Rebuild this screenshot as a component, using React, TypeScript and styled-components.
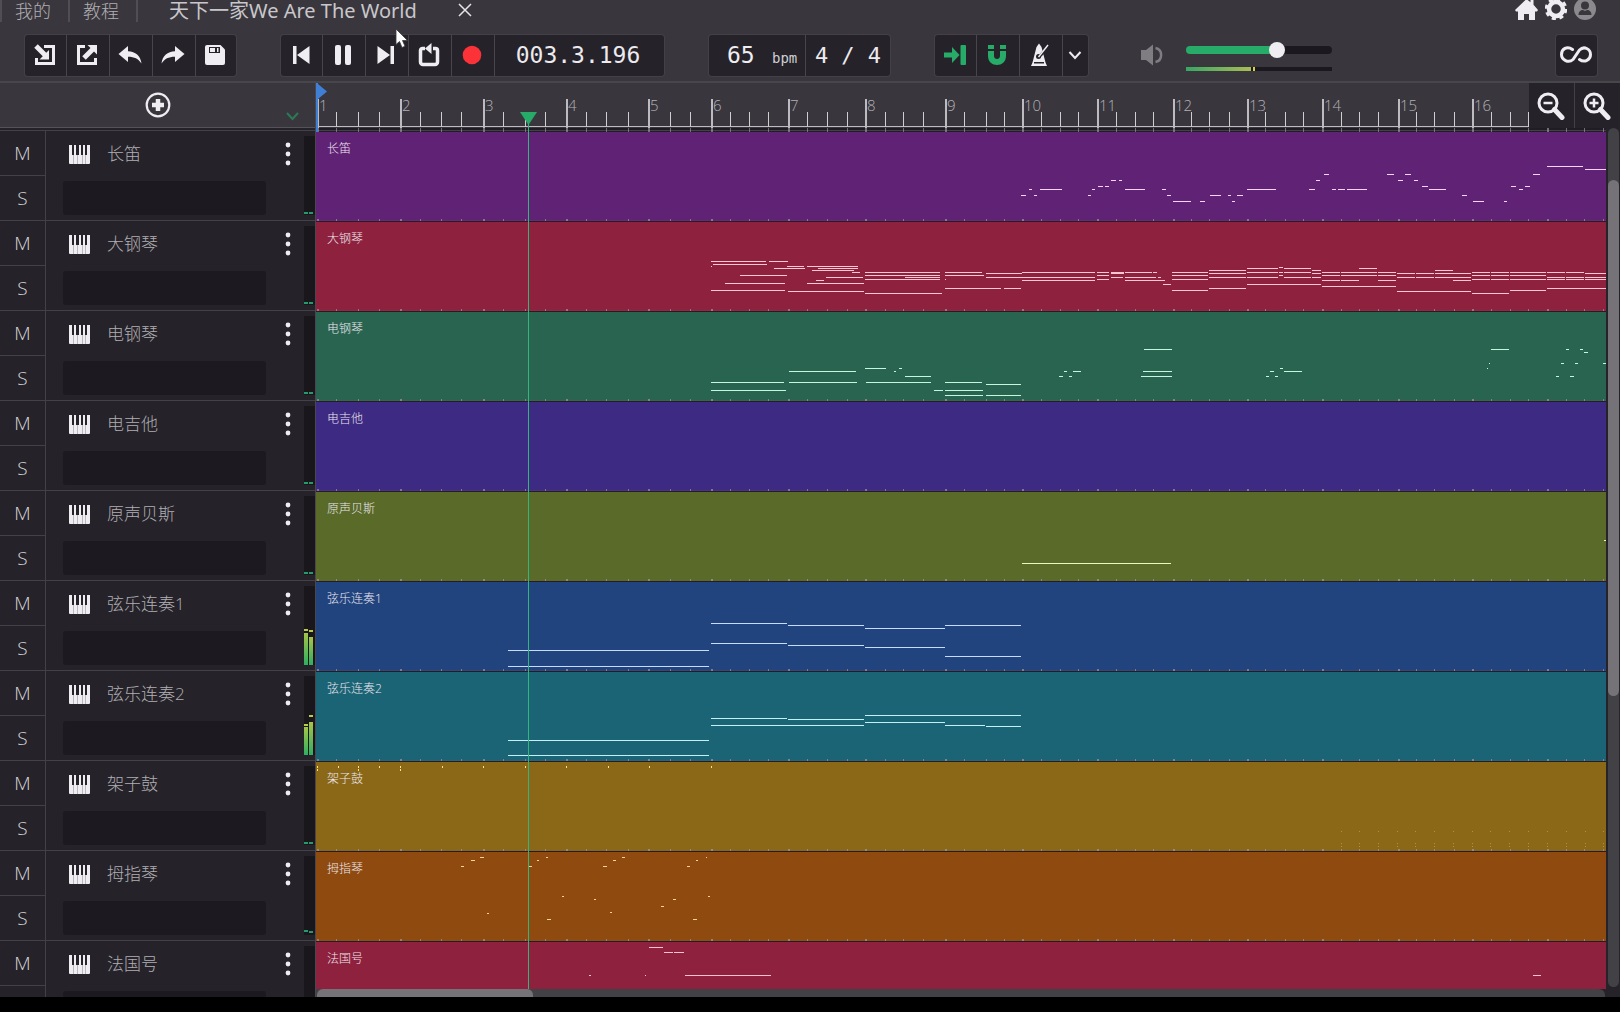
import React from "react";
import styled, { createGlobalStyle } from "styled-components";

const uiFont = '"Open Sans", "Noto Sans", "Noto Sans CJK SC", sans-serif';
const monoFont = '"DejaVu Sans Mono", "Liberation Mono", monospace';

const GlobalStyle = createGlobalStyle`
  * { box-sizing: border-box; }
  body {
    margin: 0;
    background: #000;
    color: #eceaef;
    font-family: ${uiFont};
    overflow: hidden;
  }
  button {
    appearance: none;
    background: none;
    border: 0;
    margin: 0;
    padding: 0;
    color: inherit;
    font: inherit;
    cursor: pointer;
  }
  svg { display: block; flex: none; }
`;

/* ---------- song data ---------- */

const TIMELINE_LEFT = 316;

/* Each entry: bar position followed by the beats inside that bar. */
const BARS: number[][] = [
  [317, 336, 358, 379],
  [400, 420, 441, 461],
  [483, 503, 525, 545],
  [566, 586, 606, 628],
  [648, 670, 690],
  [711, 730, 749, 768],
  [788, 807, 827, 847],
  [865, 885, 903, 923],
  [945, 964, 986, 1004],
  [1022, 1041, 1060, 1078],
  [1097, 1116, 1135, 1153],
  [1173, 1191, 1209, 1229],
  [1247, 1265, 1285, 1303],
  [1322, 1341, 1359, 1378],
  [1398, 1416, 1434, 1454],
  [1472, 1491, 1510, 1528],
  [1547, 1566, 1584, 1603],
];

type Note = [number, number, number, number?];

/* Stacked notes that share their start and length. */
const chord = (x: number, w: number, ...ys: number[]): Note[] =>
  ys.map((y) => [x, y, w] as Note);

const flute: Note[] = [
  [1021, 63, 5], [1029, 57, 3], [1034, 63, 3], [1040, 57, 22], [1088, 63, 3], [1092, 57, 3],
  [1098, 54, 5], [1105, 54, 4], [1111, 48, 5], [1119, 48, 3], [1125, 57, 20], [1162, 57, 4],
  [1167, 63, 4], [1173, 69, 18], [1200, 69, 5], [1210, 63, 11], [1228, 63, 3], [1232, 69, 3],
  [1237, 63, 6], [1247, 57, 29], [1309, 57, 6], [1316, 48, 4], [1324, 42, 5], [1332, 57, 4],
  [1338, 57, 7], [1347, 57, 20], [1387, 42, 7], [1398, 48, 5], [1405, 42, 6], [1414, 48, 4],
  [1422, 54, 6], [1429, 57, 17], [1462, 63, 5], [1473, 69, 11], [1504, 69, 3], [1511, 54, 5],
  [1519, 57, 4], [1525, 54, 5], [1533, 42, 7], [1547, 34, 36], [1585, 37, 22],
];

const piano: Note[] = [
  [711, 39, 55], [769, 39, 19], [713, 42, 54], [711, 44, 1], [774, 46, 13], [787, 44, 17],
  [787, 46, 18], [807, 44, 51], [818, 46, 40], [812, 48, 42], [852, 50, 8], [826, 55, 37],
  [816, 58, 8], [740, 53, 47], [725, 61, 60], [807, 61, 57], [711, 68, 74], [788, 69, 76],
  ...chord(865, 75, 50, 53, 57), [905, 55, 35], [865, 71, 77],
  [945, 50, 37], [945, 53, 39], [945, 57, 1], [945, 66, 56], [1004, 66, 17],
  ...chord(986, 36, 51, 55), ...chord(1022, 73, 50, 55, 58), ...chord(1097, 12, 50, 53, 57),
  [1111, 50, 13, 2], [1111, 55, 12], [1125, 50, 27], [1153, 50, 4], [1125, 55, 31],
  [1158, 55, 3], [1125, 58, 40], [1163, 62, 8],
  ...chord(1172, 36, 50, 53, 57, 68), ...chord(1209, 37, 48, 51, 55, 66),
  ...chord(1247, 31, 46, 50, 55), ...chord(1279, 4, 45, 50, 53), ...chord(1284, 27, 46, 50, 55),
  ...chord(1312, 9, 48, 51, 55), [1247, 62, 74],
  ...chord(1322, 18, 50, 53, 58), ...chord(1341, 18, 50, 53, 58), [1322, 64, 74],
  ...chord(1359, 18, 46, 50, 53), ...chord(1378, 18, 50, 53, 58),
  ...chord(1397, 18, 51, 55), ...chord(1416, 18, 51, 55), [1397, 69, 74],
  ...chord(1435, 18, 48, 51, 55), ...chord(1453, 18, 51, 55, 58),
  ...chord(1472, 18, 50, 53, 57), ...chord(1491, 18, 50, 53, 57), [1472, 71, 37],
  ...chord(1510, 18, 50, 53, 57), ...chord(1528, 18, 50, 53, 57), [1510, 68, 36],
  ...chord(1547, 18, 50, 55, 57), ...chord(1566, 18, 50, 55, 57),
  ...chord(1585, 22, 51, 55, 57), [1547, 66, 60],
];

const electricPiano: Note[] = [
  [711, 70, 73], [711, 78, 75], [789, 59, 67], [789, 70, 68], [865, 56, 21], [894, 59, 2],
  [899, 56, 3], [905, 64, 26], [866, 70, 65], [934, 78, 9], [945, 70, 37], [945, 78, 38],
  [945, 83, 38], [986, 72, 35], [986, 83, 35], [1059, 64, 4], [1064, 59, 3], [1069, 64, 3],
  [1073, 59, 8], [1144, 37, 28], [1143, 59, 29], [1141, 64, 31], [1266, 64, 3], [1270, 59, 4],
  [1275, 64, 3], [1280, 56, 3], [1284, 59, 18], [1487, 56, 1], [1489, 51, 1], [1491, 37, 18],
  [1556, 64, 3], [1561, 51, 3], [1566, 37, 3], [1570, 64, 4], [1575, 51, 3], [1580, 37, 3],
  [1584, 40, 4], [1603, 51, 3],
];

const strings1: Note[] = [
  ...chord(508, 201, 68, 84), ...chord(711, 76, 41, 61), ...chord(788, 76, 43, 63),
  ...chord(865, 80, 46, 65), ...chord(945, 76, 43, 74),
];

const strings2: Note[] = [
  ...chord(508, 201, 68, 83), [711, 46, 76], [711, 53, 153], [788, 47, 76], [865, 43, 156],
  [865, 50, 80], [945, 53, 40], [986, 54, 35],
];

const drums: Note[] = [
  ...[317, 338, 358, 379, 400, 442, 483, 525, 566, 608, 649, 711].map((x) => [x, 4, 1, 2] as Note),
  ...[317, 358, 400].map((x) => [x, 7, 1, 2] as Note),
];

const quietDrums: Note[] = [1341, 1359, 1378, 1397, 1415, 1434, 1453, 1472, 1490, 1509, 1528, 1547, 1566, 1585, 1603]
  .flatMap((x) => chord(x, 1, 69, 81, 84));

const kalimba: Note[] = [
  [461, 14, 3], [471, 8, 4], [480, 5, 4], [487, 61, 2], [529, 14, 3], [537, 8, 2], [546, 5, 2],
  [547, 67, 4], [562, 44, 2], [594, 47, 2], [603, 14, 4], [613, 8, 3], [622, 5, 3], [610, 60, 2],
  [661, 54, 3], [673, 47, 3], [687, 14, 3], [693, 67, 4], [696, 8, 2], [706, 5, 1], [708, 44, 2],
];

const horn: Note[] = [
  [589, 33, 2], [645, 33, 1], [649, 5, 14], [664, 10, 9], [674, 10, 10], [685, 33, 86], [1533, 33, 8],
];

interface TrackData {
  name: string;
  color: string;
  noteColor: string;
  notes: Note[];
  quiet?: Note[];
  levels: [number, number];
  peaks: [number, number];
}

const idle = { levels: [0, 0] as [number, number], peaks: [1, 1] as [number, number] };

const tracks: TrackData[] = [
  { name: "长笛", color: "#602275", noteColor: "#f8d4fd", notes: flute, ...idle },
  { name: "大钢琴", color: "#8e213d", noteColor: "#ffc6d2", notes: piano, ...idle },
  { name: "电钢琴", color: "#296450", noteColor: "#c4f6e0", notes: electricPiano, ...idle },
  { name: "电吉他", color: "#3d2a82", noteColor: "#c9bbff", notes: [], ...idle },
  { name: "原声贝斯", color: "#596a29", noteColor: "#ebf8bd", notes: [[1022, 71, 149], [1604, 48, 3]], ...idle },
  { name: "弦乐连奏1", color: "#21447f", noteColor: "#c6dbff", notes: strings1, levels: [32, 28], peaks: [34, 33] },
  { name: "弦乐连奏2", color: "#1b6475", noteColor: "#c2f1fa", notes: strings2, levels: [28, 33], peaks: [29, 38] },
  { name: "架子鼓", color: "#8a6817", noteColor: "#ffe27a", notes: drums, quiet: quietDrums, ...idle },
  { name: "拇指琴", color: "#8e4a0f", noteColor: "#ffd09c", notes: kalimba, levels: [0, 0], peaks: [3, 2] },
  { name: "法国号", color: "#8e213d", noteColor: "#ffbfcc", notes: horn, ...idle },
];

/* ---------- shell ---------- */

const Shell = styled.div`
  display: flex;
  flex-direction: column;
  height: 100vh;
  overflow: hidden;
  border-bottom: 15px solid #000;
  background: #252329;
`;

const TopArea = styled.header`
  flex: none;
  background: #39373d;
  border-bottom: 2px solid #47464b;
`;

const TitleBar = styled.div`
  display: flex;
  align-items: flex-start;
  justify-content: space-between;
  height: 34px;
  padding-right: 24px;
`;

const TabList = styled.nav`
  display: flex;
  align-items: flex-start;
  border-left: 2px solid #504e54;
`;

const Tab = styled.button<{ $wide?: boolean }>`
  height: 22px;
  font-size: ${(p) => (p.$wide ? 20 : 18)}px;
  line-height: 22px;
  color: ${(p) => (p.$wide ? "#c9c7cc" : "#b0aeb3")};
  ${(p) =>
    p.$wide
      ? "padding: 0 0 0 31px; font-family: 'Noto Sans', 'Noto Sans CJK SC', sans-serif;"
      : "padding: 0 17px 0 13px; border-right: 2px solid #504e54; font-weight: 300;"}
`;

const CloseButton = styled.button`
  margin-left: 41px;
  padding: 3px 0 3px;
`;

const AccountBar = styled.div`
  display: flex;
  gap: 7px;
`;

const Toolbar = styled.div`
  display: flex;
  align-items: center;
  gap: 45px;
  height: 47px;
  padding: 0 23px 5px 25px;
`;

const Group = styled.div`
  display: flex;
  height: 41px;
  border-radius: 3px;
  background: #252329;
  box-shadow: 0 0 0 1px #434147;
`;

const ToolButton = styled.button<{ $tone?: string; $slim?: boolean }>`
  display: flex;
  align-items: center;
  justify-content: center;
  width: ${(p) => (p.$slim ? 26 : 43)}px;
  padding-right: 2px;
  color: ${(p) => p.$tone ?? "#efedf1"};
  & + & { border-left: 1px solid #48464c; }
  &:first-child, ${Group} > &:last-child { width: ${(p) => (p.$slim ? 26 : 41)}px; }
`;

const TimeDisplay = styled.output`
  width: 170px;
  padding-right: 3px;
  border-left: 1px solid #48464c;
  font: 23px/41px ${monoFont};
  text-align: center;
`;

const TempoField = styled.label`
  display: flex;
  align-items: baseline;
  width: 96px;
  padding-left: 18px;
  font: 14px/41px ${monoFont};
  color: #d0ced3;
`;

const TempoInput = styled.input`
  width: 45px;
  height: 41px;
  padding: 0;
  border: 0;
  outline: 0;
  background: none;
  color: #efedf1;
  font: 23px/41px ${monoFont};
`;

const MeterButton = styled.button`
  width: 85px;
  border-left: 1px solid #48464c;
  font: 22px/41px ${monoFont};
`;

const Volume = styled.div`
  display: flex;
  align-items: center;
  gap: 22px;
  padding-left: 7px;
  color: #7f7d82;
`;

const VolumeBars = styled.div`
  display: flex;
  flex-direction: column;
  gap: 9px;
  width: 146px;
  padding-top: 2px;
`;

const VolumeSlider = styled.input`
  appearance: none;
  width: 100%;
  height: 16px;
  margin: 0;
  background: none;
  &::-webkit-slider-runnable-track {
    height: 8px;
    border-radius: 4px;
    background: linear-gradient(90deg, #27ab69 0 62%, #1b191f 62%);
  }
  &::-webkit-slider-thumb {
    appearance: none;
    width: 16px;
    height: 16px;
    margin-top: -4px;
    border-radius: 50%;
    background: #efedf2;
  }
`;

const OutputMeter = styled.div`
  display: flex;
  gap: 2px;
  height: 4px;
  background: #1b191f;
`;

const OutputLevel = styled.span`
  width: 65px;
  background: linear-gradient(90deg, #37a764, #a9bd55);
`;

const OutputPeak = styled.span`
  width: 2px;
  background: #d8cf3e;
`;

const Link = styled(Group)`
  margin-left: auto;
`;

/* ---------- workspace ---------- */

const Workspace = styled.main`
  display: flex;
  flex: 1;
  min-height: 0;
`;

const TrackPanel = styled.section`
  width: 316px;
  flex: none;
  overflow: hidden;
  border-right: 1px solid #4b474e;
`;

const TrackPanelHead = styled.div`
  display: grid;
  grid-template-columns: 1fr auto 1fr;
  align-items: center;
  height: 45px;
  background: #39373d;
  border-bottom: 1px solid #55535a;
`;

const AddButton = styled.button`
  grid-column: 2;
`;

const ExpandButton = styled.button`
  justify-self: end;
  align-self: end;
  margin-right: 14px;
  padding-bottom: 6px;
  color: #2b7a56;
`;

const TrackRows = styled.ul`
  margin: 2px 0 0;
  padding: 0;
  list-style: none;
  border-top: 1px solid #434147;
`;

const TrackRow = styled.li`
  display: flex;
  height: 90px;
  border-bottom: 1px solid #434147;
  background: #252329;
`;

const TrackToggles = styled.div`
  display: flex;
  flex-direction: column;
  width: 46px;
  border-right: 1px solid #434147;
`;

const Toggle = styled.button`
  flex: 1;
  font-size: 19px;
  font-weight: 300;
  line-height: 44px;
  color: #d6d4d8;
  & + & { border-top: 1px solid #434147; }
`;

const TrackBody = styled.div`
  display: flex;
  flex: 1;
  flex-direction: column;
  padding: 11px 13px 0 17px;
`;

const TrackTitle = styled.div`
  display: flex;
  align-items: center;
  height: 24px;
  gap: 17px;
  padding-left: 6px;
`;

const TrackName = styled.span`
  flex: 1;
  font-family: "Open Sans", "Noto Sans CJK SC", sans-serif;
  font-size: 17px;
  font-weight: 300;
  line-height: 24px;
  color: #b0aeb3;
`;

const EffectSlot = styled.div`
  width: 203px;
  height: 34px;
  margin-top: 15px;
  border-radius: 3px;
  background: #1c1a20;
`;

const LevelMeter = styled.div`
  display: flex;
  align-items: flex-end;
  gap: 1px;
  width: 11px;
  height: 79px;
  margin: 5px 0 0;
  padding: 0 2px 0 0;
  background: #19171c;
`;

const LevelChannel = styled.div`
  display: flex;
  flex: 1;
  flex-direction: column;
  justify-content: flex-end;
`;

const LevelPeak = styled.span<{ $hot: boolean }>`
  height: 2px;
  background: ${(p) => (p.$hot ? "#b9cb4a" : "#27996a")};
`;

const LevelBar = styled.span`
  background: linear-gradient(0deg, #2fae62, #a5c548);
`;

const Timeline = styled.section`
  position: relative;
  display: flex;
  flex: 1;
  flex-direction: column;
  min-width: 0;
`;

const RulerRow = styled.div`
  display: flex;
  height: 45px;
  background: #39373d;
`;

const Ruler = styled.div`
  flex: 1;
  min-width: 0;
  overflow: hidden;
  svg { width: 100%; }
`;

const ZoomButton = styled.button`
  display: flex;
  align-items: center;
  justify-content: center;
  width: 45px;
  padding-right: 1px;
  background: #252329;
  & + & { border-left: 1px solid #434147; width: 46px; }
`;

const CanvasRow = styled.div`
  display: flex;
  flex: 1;
  min-height: 0;
`;

const Canvas = styled.div`
  flex: 1;
  min-width: 0;
  overflow: hidden;
  background: #211d26;
`;

const GridStrip = styled.div`
  height: 4px;
  svg { width: 100%; }
`;

const Clip = styled.article<{ $color: string }>`
  position: relative;
  height: 90px;
  background: ${(p) => p.$color};
  border-bottom: 1px solid #2a1a24;
  overflow: hidden;
  box-shadow: inset 0 -1px 0 #6663;
`;

const ClipLayer = styled.svg`
  position: absolute;
  inset: 0;
  width: 100%;
  height: 89px;
`;

const ClipName = styled.span`
  position: relative;
  display: block;
  padding: 8px 0 0 11px;
  font-size: 12px;
  font-weight: 300;
  line-height: 18px;
  color: #ece6ee;
`;

const VerticalScroll = styled.div`
  width: 14px;
  padding: 0 1px 2px 2px;
  display: flex;
`;

const VerticalTrack = styled.div`
  flex: 1;
  padding-top: 52px;
  border-radius: 6px;
  background: #424145;
`;

const VerticalThumb = styled.div`
  height: 64%;
  border-radius: 6px;
  background: #757377;
`;

const HorizontalScroll = styled.div`
  height: 8px;
  margin-right: 15px;
  border-radius: 0 6px 0 0;
  background: #424145;
`;

const HorizontalThumb = styled.div`
  width: 216px;
  height: 8px;
  margin-left: 1px;
  border-radius: 6px 6px 0 0;
  background: #757377;
`;

const Playhead = styled.div`
  position: absolute;
  top: 29px;
  bottom: 8px;
  left: 204px;
  width: 17px;
  &::after {
    content: "";
    position: absolute;
    top: 12px;
    bottom: 0;
    left: 8px;
    width: 1px;
    background: #35b57e;
  }
`;

const StartFlag = styled.svg`
  position: absolute;
  top: 0;
  left: 0;
`;

const Pointer = styled.svg`
  position: absolute;
  top: 28px;
  left: 395px;
  pointer-events: none;
`;

/* ---------- icons ---------- */

const ImportIcon = () => (
  <svg width="22" height="22" viewBox="0 0 22 22" fill="none" stroke="currentColor" strokeWidth="3">
    <path d="M10 2.500h9.500v17H2.500V14" />
    <path d="M2 2l9 9" strokeWidth="5" />
    <path d="M15 6v9.500H5.500z" fill="currentColor" stroke="none" />
  </svg>
);

const ExportIcon = () => (
  <svg width="22" height="22" viewBox="0 0 22 22" fill="none" stroke="currentColor" strokeWidth="3">
    <path d="M9 2.500H2.500v17h17V14" />
    <path d="M8 14l9-9" strokeWidth="5" />
    <path d="M11.500 1H21v9.500z" fill="currentColor" stroke="none" />
  </svg>
);

const UndoIcon = ({ flip }: { flip?: boolean }) => (
  <svg width="24" height="20" viewBox="0 0 24 20" fill="currentColor">
    <path
      transform={flip ? "matrix(-1 0 0 1 24 0)" : undefined}
      d="M0.500 9L10 1v5.200c7.500.3 12.500 4.300 13.500 12.300-3.200-4.800-7-6.800-13.500-6.800V17z"
    />
  </svg>
);

const SaveIcon = () => (
  <svg width="22" height="22" viewBox="0 0 22 22">
    <path fill="currentColor" d="M3 1h13.500L21 5.500V19a2 2 0 0 1-2 2H3a2 2 0 0 1-2-2V3a2 2 0 0 1 2-2z" />
    <path fill="#252329" d="M5 3h11v6H5z" />
    <path fill="currentColor" d="M6 4h5v4H6zM13 4h1.500v4H13z" />
  </svg>
);

const SkipIcon = ({ flip }: { flip?: boolean }) => (
  <svg width="20" height="20" viewBox="0 0 20 20" fill="currentColor">
    <path transform={flip ? "matrix(-1 0 0 1 20 0)" : undefined} d="M2 1h3.500v18H2zM18.500 1v18L6 10z" />
  </svg>
);

const PauseIcon = () => (
  <svg width="18" height="22" viewBox="0 0 18 22" fill="currentColor">
    <rect x="1" y="1" width="6" height="20" rx="2" />
    <rect x="11" y="1" width="6" height="20" rx="2" />
  </svg>
);

const LoopIcon = () => (
  <svg width="22" height="24" viewBox="0 0 22 24" fill="none" stroke="currentColor" strokeWidth="3.500">
    <path d="M15 5.500h2.500a2 2 0 0 1 2 2V19a2.500 2.500 0 0 1-2.500 2.500H5A2.500 2.500 0 0 1 2.500 19V7.500a2 2 0 0 1 2-2H7" />
    <path d="M13.500 0v11L7 5.500z" fill="currentColor" stroke="none" />
  </svg>
);

const RecordIcon = () => (
  <svg width="20" height="20" viewBox="0 0 20 20">
    <circle cx="10" cy="10" r="9.300" fill="#fb3238" />
  </svg>
);

const FollowIcon = () => (
  <svg width="24" height="22" viewBox="0 0 24 22" fill="currentColor">
    <path d="M1 8.500h8V3l7.500 8L9 19v-5.500H1z" />
    <rect x="17.500" y="1" width="5.500" height="20" rx="1" />
  </svg>
);

const MagnetIcon = () => (
  <svg width="20" height="22" viewBox="0 0 20 22" fill="currentColor">
    <path d="M1 1h6v4H1zM13 1h6v4h-6zM1 7h6v5c0 4 6 4 6 0V7h6v5c0 12-18 12-18 0z" />
  </svg>
);

const MetronomeIcon = () => (
  <svg width="20" height="24" viewBox="0 0 20 24">
    <path fill="currentColor" d="M6.500 4L9 .500 11.500 4l4 15.500L17 23H1l1.500-3.500z" />
    <path fill="none" stroke="#252329" strokeWidth="3" d="M9 14L19 3" />
    <circle cx="8.500" cy="13.500" r="2.500" fill="#252329" />
    <path fill="none" stroke="currentColor" strokeWidth="1.500" d="M8.500 14L18 2" />
    <path fill="#252329" d="M4 19h10v1.500H4z" />
  </svg>
);

const ChevronIcon = ({ size = 14 }: { size?: number }) => (
  <svg width={size} height="10" viewBox="0 0 14 10" fill="none" stroke="currentColor" strokeWidth="2">
    <path d="M1.500 2L7 8l5.500-6" />
  </svg>
);

const SpeakerIcon = () => (
  <svg width="24" height="22" viewBox="0 0 24 22" fill="currentColor">
    <path d="M1 6h5l7-5.500v21L6 16H1z" />
    <path d="M15.500 4c7.500 1.500 7.500 12.500 0 14" fill="none" stroke="currentColor" strokeWidth="2.500" />
  </svg>
);

const InfinityIcon = () => (
  <svg width="34" height="20" viewBox="0 0 34 20" fill="none" stroke="#efedf1" strokeWidth="3" strokeLinecap="round">
    <path d="M13.500 4.500C8 .5 2.500 4 2.500 9.500S9.500 18.500 14 14.500L20.500 5C25 .5 31.500 4 31.500 9.500S25.500 18 20.500 14.500" />
  </svg>
);

const HomeIcon = () => (
  <svg width="23" height="20" viewBox="0 0 23 20" fill="#efedf1">
    <path d="M11.500-1l4 3.300V0h3v4.800L23 10l-1 1.500h-2V20h-6v-6H9v6H3v-8.500H1L0 10z" />
  </svg>
);

const GearIcon = () => (
  <svg width="22" height="20" viewBox="0 0 22 20">
    <g fill="none" stroke="#efedf1">
      <circle cx="11" cy="9" r="9.800" strokeWidth="3" strokeDasharray="4.100 3.597" />
      <circle cx="11" cy="9" r="7" strokeWidth="4.500" />
    </g>
  </svg>
);

const UserIcon = () => (
  <svg width="22" height="20" viewBox="0 0 22 20">
    <circle cx="11" cy="9" r="11" fill="#8b898e" />
    <circle cx="11" cy="5.500" r="4" fill="#39373d" />
    <path fill="#39373d" d="M4.500 15c0-3.500 2-5 4.500-5l2 1 2-1c2.500 0 4.500 1.500 4.500 5z" />
  </svg>
);

const AddIcon = () => (
  <svg width="26" height="26" viewBox="0 0 26 26" fill="none" stroke="#efedf1">
    <circle cx="13" cy="13" r="11.300" strokeWidth="2.200" />
    <path d="M13 7v12M7 13h12" strokeWidth="4.500" />
  </svg>
);

const MagnifierIcon = ({ plus }: { plus?: boolean }) => (
  <svg width="28" height="28" viewBox="0 0 28 28" fill="none" stroke="#efedf1">
    <circle cx="11" cy="11" r="9" strokeWidth="3" />
    <path d="M17.500 17.500l7.500 8" strokeWidth="5" strokeLinecap="round" />
    <path d={plus ? "M6.500 11h9M11 6.500v9" : "M6.500 11h9"} strokeWidth="2.500" />
  </svg>
);

const PianoIcon = () => (
  <svg width="21" height="19" viewBox="0 0 21 19">
    <path fill="#efedf1" d="M0 0h21v18a1 1 0 0 1-1 1H1a1 1 0 0 1-1-1z" />
    <path fill="#252329" d="M3 0h2v10H3zM7 0h3v10H7zM12 0h2v10h-2zM16 0h2v10h-2z" />
    <path stroke="#bab8bd" strokeWidth="1" d="M4.500 10v9M8.500 10v9M13.500 10v9M16.500 10v9" />
  </svg>
);

const DotsIcon = () => (
  <svg width="6" height="24" viewBox="0 0 6 24" fill="#efedf1">
    <circle cx="3" cy="3" r="2.400" />
    <circle cx="3" cy="12" r="2.400" />
    <circle cx="3" cy="21" r="2.400" />
  </svg>
);

/* ---------- parts ---------- */

const RulerScale = () => (
  <svg height="45">
    <path d="M0 43.500H3000" stroke="#bdbbc0" strokeWidth="1" />
    {BARS.map((beats) =>
      beats.map((x, beat) => (
        <rect
          key={x}
          x={x - TIMELINE_LEFT}
          y={beat === 0 ? 16 : 29}
          width={beat === 0 ? 2 : 1}
          height={beat === 0 ? 29 : 15}
          fill={beat === 0 ? "#bdbbc0" : "#d0ced2"}
        />
      )),
    )}
    {BARS.map(([x], bar) => (
      <text key={x} x={x - TIMELINE_LEFT + 2} y="28" fill="#b2b0b5" fontSize="15" fontWeight="300">
        {bar + 1}
      </text>
    ))}
  </svg>
);

const TickDots = ({ y, height }: { y: number; height: number }) => (
  <g fill="#a9a3ab" opacity="0.6">
    {BARS.map((beats) =>
      beats.map((x, beat) => (
        <rect key={x} x={x - TIMELINE_LEFT} y={y} width={beat === 0 ? 2 : 1} height={height} />
      )),
    )}
  </g>
);

const NoteRects = ({ notes }: { notes: Note[] }) => (
  <>
    {notes.map(([x, y, w, h = 1], i) => (
      <rect key={i} x={x - TIMELINE_LEFT} y={y} width={w} height={h} />
    ))}
  </>
);

const ClipView = ({ track }: { track: TrackData }) => (
  <Clip $color={track.color}>
    <ClipLayer aria-hidden="true">
      <TickDots y={87} height={2} />
      <g fill={track.noteColor}>
        <NoteRects notes={track.notes} />
      </g>
      {track.quiet && (
        <g fill={track.noteColor} opacity="0.35">
          <NoteRects notes={track.quiet} />
        </g>
      )}
    </ClipLayer>
    <ClipName>{track.name}</ClipName>
  </Clip>
);

const TrackHeader = ({ track }: { track: TrackData }) => (
  <TrackRow>
    <TrackToggles>
      <Toggle type="button">M</Toggle>
      <Toggle type="button">S</Toggle>
    </TrackToggles>
    <TrackBody>
      <TrackTitle>
        <PianoIcon />
        <TrackName>{track.name}</TrackName>
        <button type="button" aria-label="More">
          <DotsIcon />
        </button>
      </TrackTitle>
      <EffectSlot />
    </TrackBody>
    <LevelMeter>
      {track.levels.map((level, i) => (
        <LevelChannel key={i}>
          <LevelPeak
            $hot={level > 0}
            style={{ marginBottom: Math.max(track.peaks[i] - level, 0) }}
          />
          <LevelBar style={{ height: level }} />
        </LevelChannel>
      ))}
    </LevelMeter>
  </TrackRow>
);

export default function App() {
  return (
    <Shell>
      <GlobalStyle />
      <TopArea>
        <TitleBar>
          <TabList>
            <Tab type="button">我的</Tab>
            <Tab type="button">教程</Tab>
            <Tab type="button" $wide>天下一家We Are The World</Tab>
            <CloseButton type="button" aria-label="Close">
              <svg width="14" height="14" viewBox="0 0 14 14" stroke="#e6e4e8" strokeWidth="1.500">
                <path d="M1 1l12 12M13 1L1 13" />
              </svg>
            </CloseButton>
          </TabList>
          <AccountBar>
            <button type="button" aria-label="Home"><HomeIcon /></button>
            <button type="button" aria-label="Settings"><GearIcon /></button>
            <button type="button" aria-label="Account"><UserIcon /></button>
          </AccountBar>
        </TitleBar>
        <Toolbar>
          <Group>
            <ToolButton type="button" aria-label="Import"><ImportIcon /></ToolButton>
            <ToolButton type="button" aria-label="Export"><ExportIcon /></ToolButton>
            <ToolButton type="button" aria-label="Undo"><UndoIcon /></ToolButton>
            <ToolButton type="button" aria-label="Redo"><UndoIcon flip /></ToolButton>
            <ToolButton type="button" aria-label="Save"><SaveIcon /></ToolButton>
          </Group>
          <Group>
            <ToolButton type="button" aria-label="Previous"><SkipIcon /></ToolButton>
            <ToolButton type="button" aria-label="Pause"><PauseIcon /></ToolButton>
            <ToolButton type="button" aria-label="Next"><SkipIcon flip /></ToolButton>
            <ToolButton type="button" aria-label="Loop"><LoopIcon /></ToolButton>
            <ToolButton type="button" aria-label="Record"><RecordIcon /></ToolButton>
            <TimeDisplay>003.3.196</TimeDisplay>
          </Group>
          <Group>
            <TempoField>
              <TempoInput defaultValue="65" />
              bpm
            </TempoField>
            <MeterButton type="button">4 / 4</MeterButton>
          </Group>
          <Group>
            <ToolButton type="button" aria-label="Follow playhead" $tone="#27ab69"><FollowIcon /></ToolButton>
            <ToolButton type="button" aria-label="Snap" $tone="#27ab69"><MagnetIcon /></ToolButton>
            <ToolButton type="button" aria-label="Metronome"><MetronomeIcon /></ToolButton>
            <ToolButton type="button" aria-label="Metronome options" $slim><ChevronIcon /></ToolButton>
          </Group>
          <Volume>
            <SpeakerIcon />
            <VolumeBars>
              <VolumeSlider type="range" min="0" max="100" defaultValue="64" aria-label="Volume" />
              <OutputMeter>
                <OutputLevel />
                <OutputPeak />
              </OutputMeter>
            </VolumeBars>
          </Volume>
          <Link>
            <ToolButton type="button" aria-label="Connect"><InfinityIcon /></ToolButton>
          </Link>
        </Toolbar>
      </TopArea>
      <Workspace>
        <TrackPanel>
          <TrackPanelHead>
            <AddButton type="button" aria-label="Add track"><AddIcon /></AddButton>
            <ExpandButton type="button" aria-label="Expand"><ChevronIcon size={17} /></ExpandButton>
          </TrackPanelHead>
          <TrackRows>
            {tracks.map((track) => (
              <TrackHeader key={track.name} track={track} />
            ))}
          </TrackRows>
        </TrackPanel>
        <Timeline>
          <RulerRow>
            <Ruler><RulerScale /></Ruler>
            <ZoomButton type="button" aria-label="Zoom out"><MagnifierIcon /></ZoomButton>
            <ZoomButton type="button" aria-label="Zoom in"><MagnifierIcon plus /></ZoomButton>
          </RulerRow>
          <CanvasRow>
            <Canvas>
              <GridStrip>
                <svg height="4">
                  <path d="M0 2.500H3000" stroke="#434147" />
                  <TickDots y={0} height={4} />
                </svg>
              </GridStrip>
              {tracks.map((track) => (
                <ClipView key={track.name} track={track} />
              ))}
            </Canvas>
            <VerticalScroll>
              <VerticalTrack><VerticalThumb /></VerticalTrack>
            </VerticalScroll>
          </CanvasRow>
          <HorizontalScroll><HorizontalThumb /></HorizontalScroll>
          <StartFlag width="12" height="49" viewBox="0 0 12 49" fill="#3f7fd6">
            <path d="M0 0h2v49H0zM2 1l9 7.500L2 16z" />
          </StartFlag>
          <Playhead>
            <svg width="17" height="13" viewBox="0 0 17 13" fill="#27ab69">
              <path d="M0 0h17L8.500 13z" />
            </svg>
          </Playhead>
        </Timeline>
      </Workspace>
      <Pointer width="14" height="21" viewBox="0 0 14 21">
        <path d="M1 1v15.500l3.500-3 2.500 6 3-1.300L7.500 12.500h5z" fill="#fff" stroke="#39373d" strokeWidth="0.800" />
      </Pointer>
    </Shell>
  );
}
